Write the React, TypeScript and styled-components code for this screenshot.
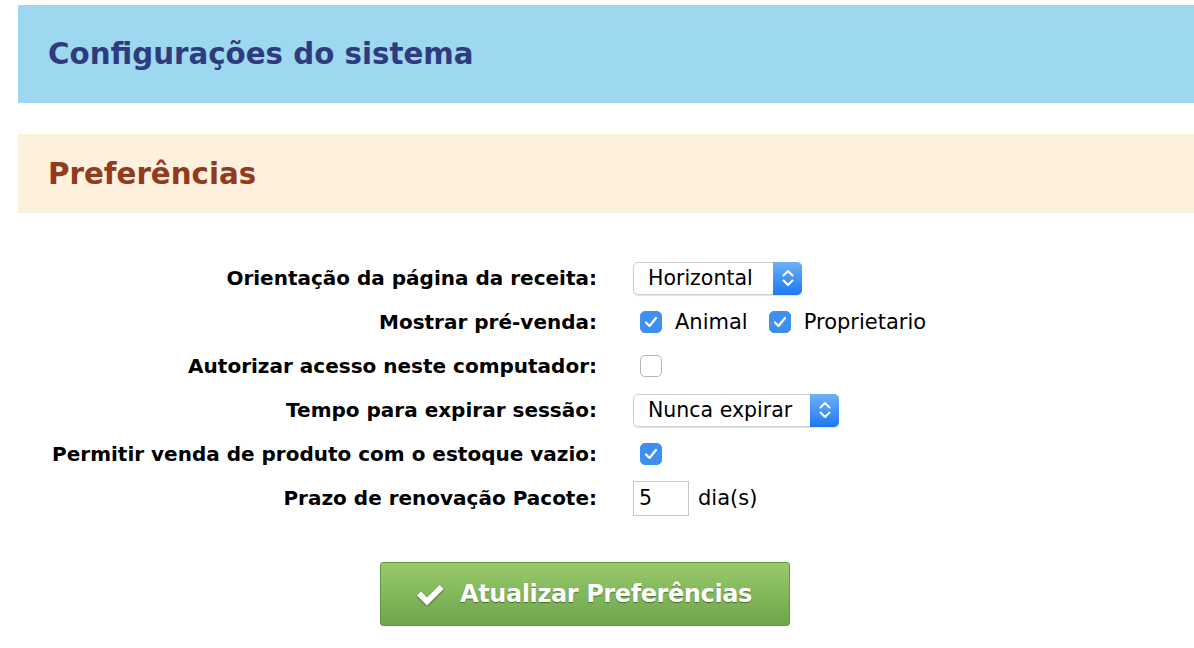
import React from 'react';
import styled, { createGlobalStyle } from 'styled-components';

const GlobalStyle = createGlobalStyle`
  html, body {
    margin: 0;
    padding: 0;
    background: #ffffff;
    overflow: hidden;
  }
  body {
    font-family: "DejaVu Sans", "Liberation Sans", sans-serif;
  }
`;

const Page = styled.div`
  padding: 5px 0 0 18px;
`;

const Banner = styled.div<{ $bg: string; $color: string; $height: number }>`
  display: flex;
  align-items: center;
  height: ${(p) => p.$height}px;
  padding-left: 30px;
  background: ${(p) => p.$bg};
  color: ${(p) => p.$color};
  margin-bottom: 31px;

  h1, h2 {
    margin: 0;
    font-size: 29.3px;
    font-weight: 700;
  }
`;

const Form = styled.div`
  display: grid;
  grid-template-columns: 579px auto;
  column-gap: 36px;
  grid-auto-rows: 44px;
  margin-top: 43px;
  margin-left: -18px;
  padding-left: 18px;
`;

const Label = styled.label`
  display: flex;
  align-items: center;
  justify-content: flex-end;
  font-size: 20px;
  font-weight: 700;
  color: #000;
  white-space: nowrap;
`;

const Field = styled.div<{ $gap?: number }>`
  display: flex;
  align-items: center;
  gap: ${(p) => p.$gap ?? 14}px;
  font-size: 21px;
  color: #000;
`;

const SelectBox = styled.div<{ $width: number }>`
  position: relative;
  display: flex;
  align-items: center;
  width: ${(p) => p.$width}px;
  height: 33px;
  box-sizing: border-box;
  border: 1px solid #cfcfcf;
  border-radius: 5px;
  background: #fff;
  padding-left: 14px;
  box-shadow: 0 1px 1px rgba(0, 0, 0, 0.12);
  font-size: 20.5px;
`;

const Stepper = styled.span`
  position: absolute;
  top: -1px;
  right: -1px;
  bottom: -1px;
  width: 29px;
  border-radius: 0 5px 5px 0;
  background: linear-gradient(#6fb0f7, #1d78f2);
  display: flex;
  align-items: center;
  justify-content: center;
`;

const Check = styled.span<{ $checked?: boolean }>`
  display: inline-flex;
  align-items: center;
  justify-content: center;
  width: 22px;
  height: 22px;
  box-sizing: border-box;
  margin-left: 7px;
  border-radius: 5px;
  background: ${(p) => (p.$checked ? '#3d8ff1' : '#fff')};
  border: 1px solid ${(p) => (p.$checked ? '#3d8ff1' : '#b5b5b5')};
`;

const CheckOption = styled.span`
  display: inline-flex;
  align-items: center;
  gap: 13px;
`;

const NumberInput = styled.input`
  width: 56px;
  height: 35px;
  box-sizing: border-box;
  border: 1px solid #c8c8c8;
  padding: 0 0 0 5px;
  font-family: "DejaVu Sans", sans-serif;
  font-size: 20.5px;
  color: #000;
  outline: none;
`;

const Actions = styled.div`
  padding: 42px 0 0 362px;
`;

const SubmitButton = styled.button`
  display: inline-flex;
  align-items: center;
  gap: 15px;
  width: 410px;
  height: 64px;
  box-sizing: border-box;
  padding: 0 0 0 34px;
  border: 1px solid #5f9a3e;
  border-radius: 3px;
  background: linear-gradient(#99c96d, #6da649);
  color: #fff;
  font-family: "DejaVu Sans", sans-serif;
  font-size: 24px;
  font-weight: 700;
  letter-spacing: -0.4px;
  text-shadow: 0 1px 1px rgba(0, 0, 0, 0.4);
  cursor: pointer;
`;

const Chevrons = () => (
  <svg width="14" height="22" viewBox="0 0 14 22" fill="none" stroke="#fff" strokeWidth="2" strokeLinecap="round" strokeLinejoin="round">
    <path d="M2.5 8.5L7 4l4.5 4.5" />
    <path d="M2.5 13.5L7 18l4.5-4.5" />
  </svg>
);

const Tick = () => (
  <svg width="14" height="12" viewBox="0 0 14 12" fill="none" stroke="#fff" strokeWidth="2.2" strokeLinecap="round" strokeLinejoin="round">
    <path d="M2 6.5l3.5 3.5L12 2" />
  </svg>
);

const Checkbox: React.FC<{ checked?: boolean }> = ({ checked }) => (
  <Check $checked={checked}>{checked && <Tick />}</Check>
);

const Select: React.FC<{ value: string; width: number }> = ({ value, width }) => (
  <SelectBox $width={width}>
    {value}
    <Stepper>
      <Chevrons />
    </Stepper>
  </SelectBox>
);

const App: React.FC = () => {
  return (
    <Page>
      <GlobalStyle />
      <Banner $bg="#9dd7f0" $color="#2e3b7d" $height={98}>
        <h1>Configurações do sistema</h1>
      </Banner>
      <Banner $bg="#fdf0dc" $color="#923a1e" $height={79}>
        <h2>Preferências</h2>
      </Banner>

      <Form>
        <Label>Orientação da página da receita:</Label>
        <Field>
          <Select value="Horizontal" width={169} />
        </Field>

        <Label>Mostrar pré-venda:</Label>
        <Field>
          <CheckOption>
            <Checkbox checked />
            Animal
          </CheckOption>
          <CheckOption>
            <Checkbox checked />
            Proprietario
          </CheckOption>
        </Field>

        <Label>Autorizar acesso neste computador:</Label>
        <Field>
          <Checkbox />
        </Field>

        <Label>Tempo para expirar sessão:</Label>
        <Field>
          <Select value="Nunca expirar" width={206} />
        </Field>

        <Label>Permitir venda de produto com o estoque vazio:</Label>
        <Field>
          <Checkbox checked />
        </Field>

        <Label>Prazo de renovação Pacote:</Label>
        <Field $gap={9}>
          <NumberInput defaultValue="5" />
          dia(s)
        </Field>
      </Form>

      <Actions>
        <SubmitButton>
          <svg width="30" height="24" viewBox="0 0 30 24" fill="#fff" style={{ filter: 'drop-shadow(0 1px 1px rgba(0,0,0,0.4))' }}>
            <path d="M2 13.5l4-4 6 6L24.5 3l4 4L12 23.5z" />
          </svg>
          Atualizar Preferências
        </SubmitButton>
      </Actions>
    </Page>
  );
};

export default App;
